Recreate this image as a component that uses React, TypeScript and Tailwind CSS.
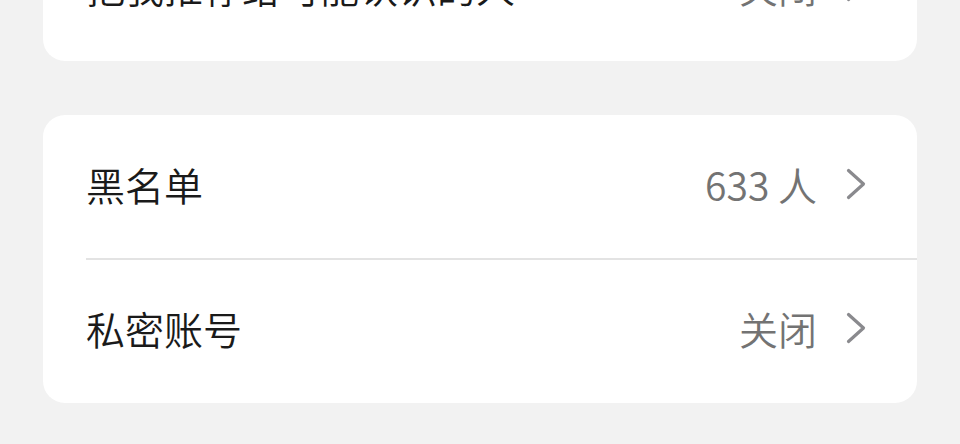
import { FC } from 'react';

const Chevron: FC = () => (
	<svg width="22" height="32" viewBox="0 0 22 32" className="ml-[28px] shrink-0">
		<path d="M3.5 2.5 L18.5 16 L3.5 29.5" fill="none" stroke="#8a8a8e" strokeWidth="3.2" strokeLinecap="round" strokeLinejoin="round" />
	</svg>
);

const Row: FC<{ label: string; value: string; divider?: boolean }> = ({ label, value, divider = false }) => (
	<div className="relative flex h-[144px] items-center pb-[6px] pl-[43px] pr-[50px]">
		<span className="flex-1 text-[39px] font-[350] text-[#1a1a1a]">{label}</span>
		<span className="text-[39px] font-[350] text-[#737373]">{value}</span>
		<Chevron />
		{divider && <div className="absolute -bottom-px left-[43px] right-0 h-[2px] bg-[#e3e3e3]" />}
	</div>
);

export default function App() {
	return (
		<div
			className="h-[444px] w-[960px] overflow-hidden bg-[#f2f2f2] px-[43px]"
			style={{ fontFamily: '"Noto Sans CJK SC", "Noto Sans", sans-serif' }}>
			<div className="-mt-[83px] overflow-hidden rounded-[22px] bg-white">
				<Row label="把我推荐给可能认识的人" value="关闭" />
			</div>
			<div className="mt-[54px] overflow-hidden rounded-[22px] bg-white">
				<Row label="黑名单" value="633 人" divider />
				<Row label="私密账号" value="关闭" />
			</div>
		</div>
	);
}
